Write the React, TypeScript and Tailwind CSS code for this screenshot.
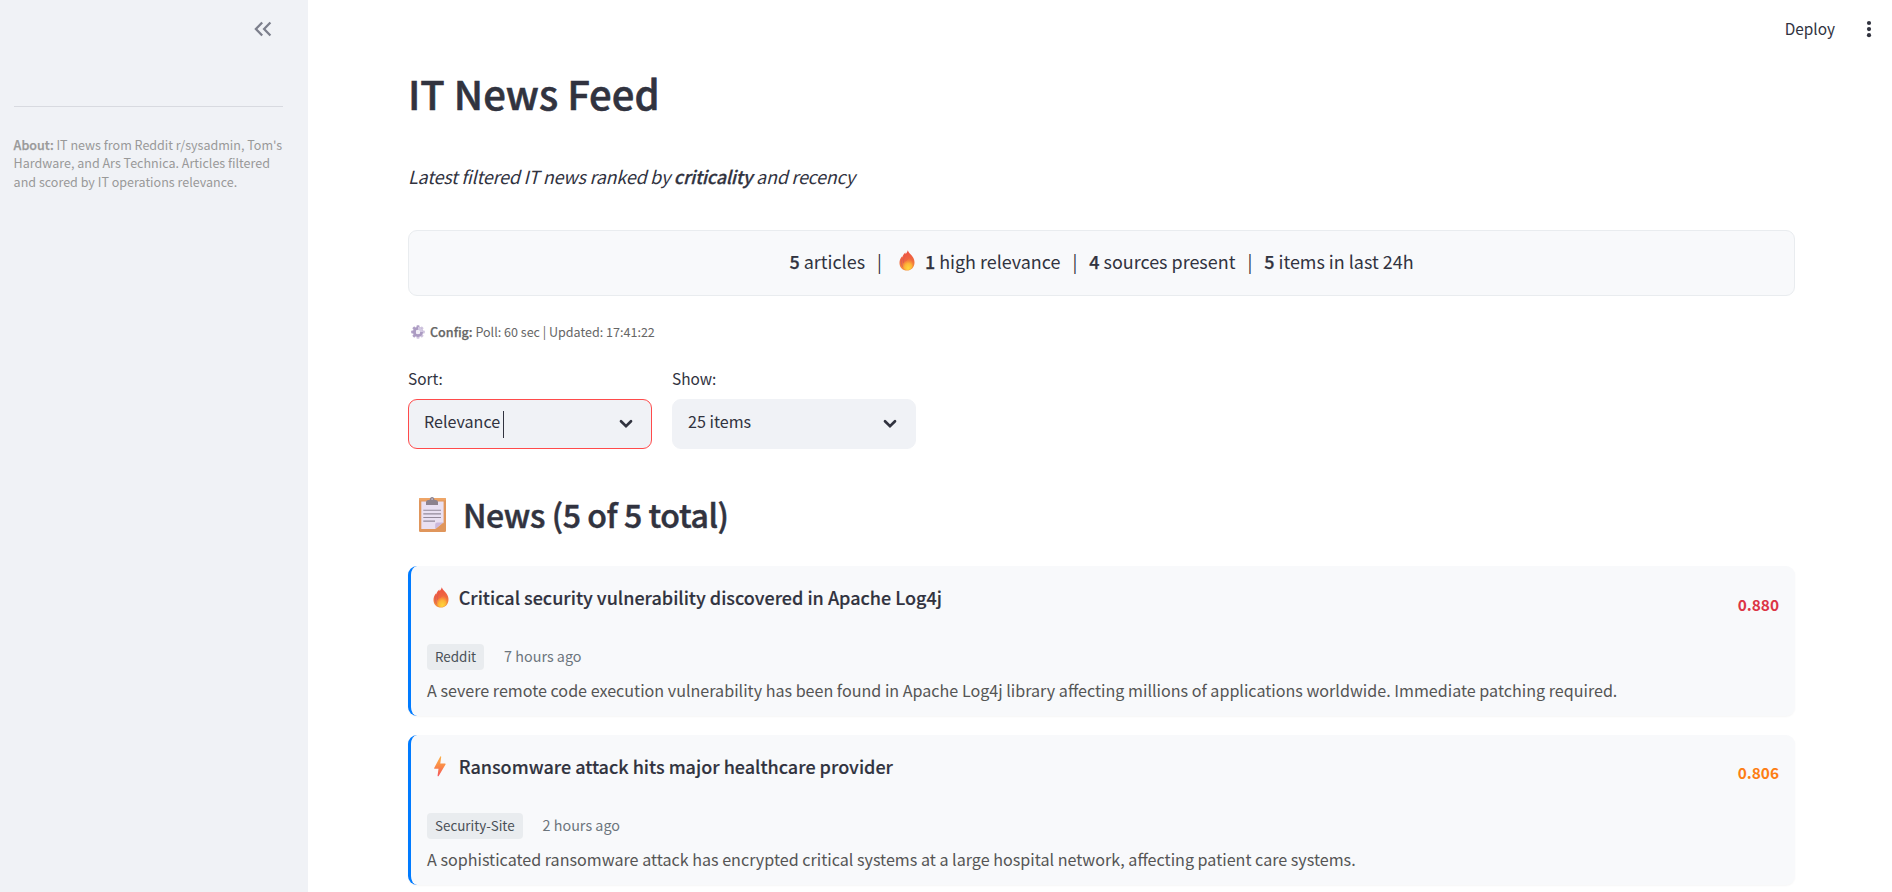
import { useId } from "react";

type Level = "fire" | "bolt";

interface Article {
  level: Level;
  title: string;
  score: string;
  scoreClass: string;
  source: string;
  age: string;
  summary: string;
}

const articles: Article[] = [
  {
    level: "fire",
    title: "Critical security vulnerability discovered in Apache Log4j",
    score: "0.880",
    scoreClass: "text-[#dc3545] pt-[26px]",
    source: "Reddit",
    age: "7 hours ago",
    summary:
      "A severe remote code execution vulnerability has been found in Apache Log4j library affecting millions of applications worldwide. Immediate patching required.",
  },
  {
    level: "bolt",
    title: "Ransomware attack hits major healthcare provider",
    score: "0.806",
    scoreClass: "text-[#fd7e14] pt-[25px]",
    source: "Security-Site",
    age: "2 hours ago",
    summary:
      "A sophisticated ransomware attack has encrypted critical systems at a large hospital network, affecting patient care systems.",
  },
];

function Fire({ className }: { className: string }) {
  const id = useId();
  return (
    <svg viewBox="0 0 16 21" className={className}>
      <defs>
        <linearGradient id={`${id}o`} x1="0.45" y1="0" x2="0.55" y2="1">
          <stop offset="0" stopColor="#ee4f42" />
          <stop offset="0.5" stopColor="#ef6840" />
          <stop offset="1" stopColor="#f59a3c" />
        </linearGradient>
        <radialGradient id={`${id}i`} cx="0.55" cy="0.85" r="0.8">
          <stop offset="0" stopColor="#ffd63c" />
          <stop offset="0.5" stopColor="#fdb338" />
          <stop offset="1" stopColor="#f8703a" stopOpacity="0.3" />
        </radialGradient>
      </defs>
      <path
        d="M8.8 0.2C9.4 2.7 12 4.2 13.6 6.8C14.9 8.7 15.6 10.8 15.5 13C15.3 17.4 12.2 20.6 8 20.6C3.7 20.6 0.6 17.4 0.5 13.2C0.4 10.4 1.4 8.2 3.1 6.2L3.3 7.4C3.8 5.2 5 3.8 6.4 2.6L6.5 4C7.7 2.9 8.5 1.7 8.8 0.2Z"
        fill={`url(#${id}o)`}
      />
      <path d="M3.2 8.8C2.1 11.2 2.1 14 3.6 16.8" fill="none" stroke="#c9566b" strokeWidth="0.9" opacity="0.6" />
      <path d="M6.2 5.6C4.6 8.2 4.2 10.6 4.6 13" fill="none" stroke="#d4525b" strokeWidth="0.9" opacity="0.6" />
      <path
        d="M10 7.8C12.6 10 14 12 13.8 14.8C13.6 18.2 11.2 20.1 8.4 20.1C5.4 20.1 3.6 17.8 3.9 15C4.2 12.6 6 11.6 7.6 10.7C8.8 10 9.7 9 10 7.8Z"
        fill={`url(#${id}i)`}
      />
    </svg>
  );
}

function Bolt({ className }: { className: string }) {
  const id = useId();
  return (
    <svg viewBox="0 0 12 21" className={className}>
      <defs>
        <linearGradient id={`${id}b`} x1="0.5" y1="0" x2="0.5" y2="1">
          <stop offset="0" stopColor="#fbb04a" />
          <stop offset="0.5" stopColor="#fa8a48" />
          <stop offset="1" stopColor="#f4545c" />
        </linearGradient>
      </defs>
      <path
        d="M6.3 0.4C6.7 0.1 7.3 0.4 7.2 1L6.3 7.5H11C11.6 7.5 11.8 8 11.5 8.5L4.7 19.9C4.3 20.5 3.5 20.3 3.6 19.6L4.5 12.8H0.8C0.2 12.8 0 12.3 0.3 11.8Z"
        fill={`url(#${id}b)`}
      />
    </svg>
  );
}

function Clipboard({ className }: { className: string }) {
  return (
    <svg viewBox="0 0 27 35" className={className}>
      <rect x="0" y="1" width="27" height="34" rx="1.2" fill="#e0965c" />
      <rect x="0" y="1" width="27" height="2.4" rx="1.2" fill="#eea567" />
      <path d="M2.3 4.6H24.6V26L17.6 32H2.3Z" fill="#e9e0f2" />
      <path d="M16.2 32V27.4Q16.2 25.6 18 25.6H24.6Z" fill="#cbb8dc" />
      <path d="M24.6 25.6V32H16.4Z" fill="#e0965c" />
      <path
        d="M7 8V5.2C7 3.4 8.4 2.9 10.6 2.9C11 1.2 11.6 0 13.1 0C14.6 0 15.2 1.2 15.6 2.9C17.8 2.9 19 3.4 19 5.2V8Z"
        fill="#8c828e"
      />
      <circle cx="13.1" cy="2.1" r="0.9" fill="#c7bfca" />
      <path d="M4.3 13.2H22M4.3 16.9H22M4.3 20.5H22M4.3 24.1H16" stroke="#93899a" strokeWidth="1.1" />
    </svg>
  );
}

function Gear({ className }: { className: string }) {
  const teeth = [0, 45, 90, 135, 180, 225, 270, 315];
  return (
    <svg viewBox="0 0 14 14" className={className}>
      {teeth.map((angle) => (
        <rect
          key={angle}
          x="5.5"
          y="0.2"
          width="3"
          height="4"
          rx="0.8"
          fill={angle > 20 && angle < 200 ? "#cfc4de" : "#b0a0c6"}
          transform={`rotate(${angle} 7 7)`}
        />
      ))}
      <circle cx="7" cy="7" r="3.6" fill="none" stroke="#ab9bc2" strokeWidth="2.8" />
      <path d="M7 3.4A3.6 3.6 0 0 1 10.6 7" fill="none" stroke="#d3c9e2" strokeWidth="2.8" />
      <circle cx="7" cy="7" r="2" fill="#f1edf7" />
    </svg>
  );
}

function Divider() {
  return <span className="mx-3">|</span>;
}

function Strong({ children }: { children: string }) {
  return <strong className="font-medium [-webkit-text-stroke:0.25px_currentColor]">{children}</strong>;
}

function Select({ label, value, focused }: { label: string; value: string; focused?: boolean }) {
  return (
    <div className="w-[244px]">
      <div className="text-[15.4px] leading-6">{label}</div>
      <div
        className={`mt-[9px] flex h-[50px] items-center justify-between rounded-[9px] border bg-[#f0f2f6] pr-[18px] pl-[15px] ${
          focused ? "border-[#ff4b4b]" : "border-[#f0f2f6]"
        }`}
      >
        <div className="flex items-center">
          <span className="pb-1.5 text-[16.1px] leading-6">{value}</span>
          {focused && <span className="ml-[2.85px] h-[27px] w-px bg-[#31333f]" />}
        </div>
        <svg viewBox="0 0 14 10" className="h-[10px] w-[14px]">
          <path d="M2 2.2L7 7.1L12 2.2" fill="none" stroke="#31333f" strokeWidth="2.7" strokeLinecap="round" />
        </svg>
      </div>
    </div>
  );
}

function ArticleCard({ article }: { article: Article }) {
  return (
    <article className="flex h-[150px] items-start justify-between rounded-[9px] border-l-[3px] border-[#007bff] bg-[#f8f9fb] pr-4 pl-4 shadow-[0_1px_2px_rgba(0,0,0,0.04)]">
      <div className="pt-[17px]">
        <h3 className="flex h-7 items-center text-lg leading-7 font-medium [-webkit-text-stroke:0.15px_currentColor]">
          <span className="flex w-[31.7px] justify-start pl-[5.5px]">
            {article.level === "fire" ? (
              <Fire className="h-[21px] w-4" />
            ) : (
              <Bolt className="ml-[1.5px] h-[21px] w-3" />
            )}
          </span>
          {article.title}
        </h3>
        <div className="mt-[33px] flex items-start">
          <span className="h-[26px] rounded-[4px] bg-[#e9ecef] px-2 text-[13.4px] leading-6 text-[#495057]">
            {article.source}
          </span>
          <span className="ml-5 text-[14.35px] leading-6 text-[#6c757d]">{article.age}</span>
        </div>
        <p className="mt-2 text-[16.13px] leading-6 text-[#555555]">{article.summary}</p>
      </div>
      <span className={`text-[15.4px] leading-6 font-bold ${article.scoreClass}`}>{article.score}</span>
    </article>
  );
}

export default function App() {
  return (
    <div className="flex h-[892px] w-full overflow-hidden bg-white font-['Noto_Sans_CJK_SC','Source_Sans_Pro',sans-serif] text-[#31333f]">
      <aside className="w-[308px] shrink-0 bg-[#f0f2f6] pr-[25px] pl-[14px]">
        <div className="flex h-[106px] justify-end pt-[21px] pr-[11px]">
          <svg viewBox="0 0 18 16" className="h-4 w-[18px]">
            <path
              d="M8.2 1.5L1.9 8L8.2 14.5M16.4 1.5L10.1 8L16.4 14.5"
              fill="none"
              stroke="#7c7f8c"
              strokeWidth="2.3"
            />
          </svg>
        </div>
        <hr className="border-[#d8dae0]" />
        <p className="mt-[28.6px] -ml-[0.4px] text-[12.54px] leading-[18.5px] whitespace-nowrap text-[#999999]">
          <Strong>About:</Strong> IT news from Reddit r/sysadmin, Tom's
          <br />
          Hardware, and Ars Technica. Articles filtered
          <br />
          and scored by IT operations relevance.
        </p>
      </aside>

      <main className="min-w-0 flex-1">
        <header className="flex h-[68px] items-start justify-end pt-4 pr-[20.5px]">
          <span className="text-[15.4px] leading-6">Deploy</span>
          <svg viewBox="0 0 6 18" className="mt-[3.5px] ml-[30.5px] h-[18px] w-1.5" fill="#31333f">
            <circle cx="3" cy="3" r="2.1" />
            <circle cx="3" cy="9.1" r="2.1" />
            <circle cx="3" cy="15.2" r="2.1" />
          </svg>
        </header>

        <div className="pr-[97px] pl-[100px]">
          <h1 className="text-[40px] leading-[50px] font-medium [-webkit-text-stroke:0.6px_currentColor]">
            IT News Feed
          </h1>
          <p className="mt-11 text-lg leading-7 tracking-[-0.245px] italic">
            Latest filtered IT news ranked by <Strong>criticality</Strong> and recency
          </p>

          <div className="mt-10 flex h-[66px] items-center justify-center rounded-[9px] border border-[#e9ecef] bg-[#f8f9fb] pb-[5px] text-[17.95px] leading-7">
            <span>
              <Strong>5</Strong> articles
            </span>
            <Divider />
            <Fire className="mr-[10px] ml-[5px] h-[21px] w-4" />
            <span>
              <Strong>1</Strong> high relevance
            </span>
            <Divider />
            <span>
              <Strong>4</Strong> sources present
            </span>
            <Divider />
            <span>
              <Strong>5</Strong> items in last 24h
            </span>
          </div>

          <div className="mt-[26px] flex items-center text-[12.55px] leading-5 text-[#666666]">
            <Gear className="mr-[5.5px] ml-[2.5px] size-[14px]" />
            <span>
              <Strong>Config:</Strong> Poll: 60 sec | Updated: 17:41:22
            </span>
          </div>

          <div className="mt-6 flex gap-5">
            <Select label="Sort:" value="Relevance" focused />
            <Select label="Show:" value="25 items" />
          </div>

          <h2 className="mt-[45px] flex h-10 items-center text-[32px] leading-10 font-medium tracking-[-0.4px] [-webkit-text-stroke:0.5px_currentColor]">
            <Clipboard className="mr-[17px] ml-[11px] h-[35px] w-[27px] [-webkit-text-stroke:0]" />
            News (5 of 5 total)
          </h2>

          <section className="mt-8 flex flex-col gap-[19px]">
            {articles.map((article) => (
              <ArticleCard key={article.title} article={article} />
            ))}
          </section>
        </div>
      </main>
    </div>
  );
}
